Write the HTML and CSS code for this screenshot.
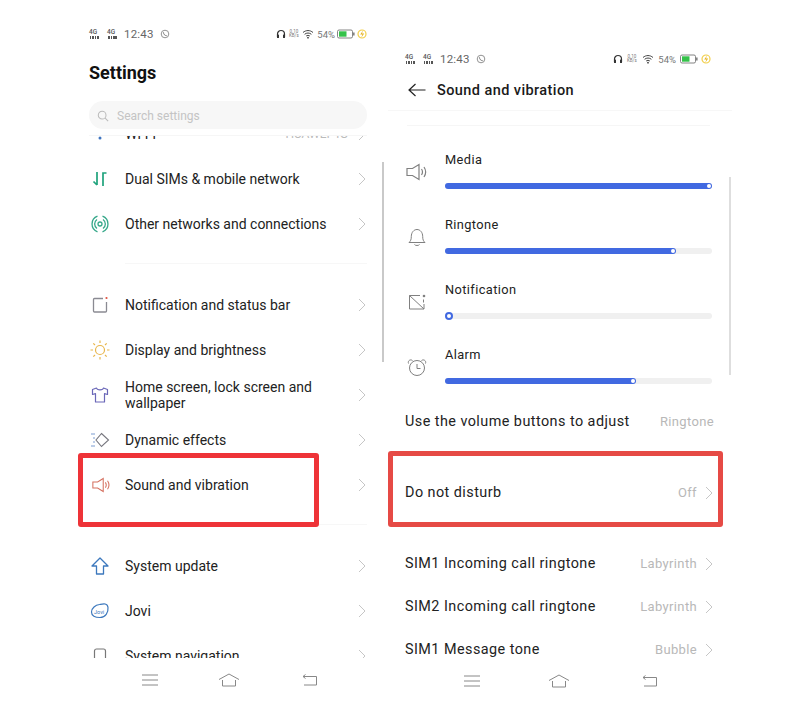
FILE: index.html
```html
<!DOCTYPE html>
<html>
<head>
  <meta charset="utf-8">
  <title>Settings - Sound and vibration</title>
  <link rel="stylesheet" href="styles.css">
</head>
<body>

  <!-- shared icons -->
  <svg class="defs" width="0" height="0">
    <symbol id="i-chev" viewBox="0 0 8 14"><path d="M1 1l6 6-6 6" fill="none" stroke="currentColor" stroke-width="1"/></symbol>
    <symbol id="i-whats" viewBox="0 0 10 10"><circle cx="5" cy="5" r="3.8" fill="none" stroke="#777" stroke-width=".8"/><path d="M3.5 3.3c0 2 1.300 3.300 3.200 3.400" fill="none" stroke="#777" stroke-width="1"/></symbol>
    <symbol id="i-head" viewBox="0 0 10 10"><path d="M1.500 8V5a3.500 3.500 0 0 1 7 0v3" fill="none" stroke="#333" stroke-width="1.200"/><rect x="1" y="5.500" width="2" height="3.500" rx=".6" fill="#333"/><rect x="7" y="5.500" width="2" height="3.500" rx=".6" fill="#333"/></symbol>
    <symbol id="i-wifi" viewBox="0 0 12 10"><path d="M1 3.500c3-2.600 7-2.600 10 0M2.600 5.300c2-1.700 4.800-1.700 6.800 0M4.200 7c1-.8 2.600-.8 3.600 0" fill="none" stroke="#444" stroke-width="1"/><circle cx="6" cy="8.700" r=".9" fill="#444"/></symbol>
    <symbol id="i-batt" viewBox="0 0 18 10"><rect x=".5" y="1" width="15" height="8" rx="1.500" fill="none" stroke="#666" stroke-width=".8"/><rect x="2" y="2.300" width="7.500" height="5.400" fill="#35c24a"/><rect x="16.200" y="3.500" width="1.300" height="3" fill="#666"/></symbol>
    <symbol id="i-bolt" viewBox="0 0 10 10"><circle cx="5" cy="5" r="4" fill="none" stroke="#f2cf4a" stroke-width="1.200"/><path d="M6 1.500L3.200 5.600h2.200L4.200 8.800 7.200 4.400H5z" fill="#e6b422"/></symbol>
    <symbol id="i-speaker" viewBox="0 0 22 18"><path d="M1 5.500h5.500L13 1.500v15l-6.500-4H1z" fill="none" stroke="currentColor" stroke-width="1.200"/><path d="M15.500 6c1.200 1.800 1.200 4.200 0 6M18 4c2 3 2 7 0 10" fill="none" stroke="currentColor" stroke-width="1.200"/></symbol>
    <symbol id="i-menu" viewBox="0 0 16 12"><path d="M0 1h16M0 6h16M0 11h16" stroke="#888" stroke-width="1"/></symbol>
    <symbol id="i-home" viewBox="0 0 22 14"><path d="M1 6.500L11 1l10 5.500" fill="none" stroke="#888" stroke-width="1"/><path d="M4.500 7v6h13V7" fill="none" stroke="#888" stroke-width="1"/></symbol>
    <symbol id="i-back" viewBox="0 0 16 12"><path d="M1 2.500h13.500v8.500H2" fill="none" stroke="#888" stroke-width="1"/><path d="M3.500 .5L1 2.500l2.500 2" fill="none" stroke="#888" stroke-width="1"/></symbol>
  </svg>

  <div class="phone phone-left">
    <div class="status">
      <span class="net">4G<i class="bars"></i></span>
      <span class="net">4G<i class="bars"></i></span>
      <span class="clock">12:43</span>
      <svg class="st-icon whats"><use href="#i-whats"/></svg>
      <span class="status-right">
        <svg class="st-icon"><use href="#i-head"/></svg>
        <span class="speed">0.10<br>KB/s</span>
        <svg class="st-icon wifi"><use href="#i-wifi"/></svg>
        <span class="pct">54%</span>
        <svg class="st-batt"><use href="#i-batt"/></svg>
        <svg class="st-icon"><use href="#i-bolt"/></svg>
      </span>
    </div>

    <h1 class="title">Settings</h1>

    <div class="search">
      <svg class="search-icon" viewBox="0 0 14 14"><circle cx="6" cy="6" r="4.500" fill="none" stroke="#bbb" stroke-width="1.200"/><path d="M9.500 9.500L13 13" stroke="#bbb" stroke-width="1.200"/></svg>
      <span>Search settings</span>
    </div>

    <div class="list">
      <div class="row row-first">
        <svg class="icon" viewBox="0 0 20 20"><path d="M2 6c5-4 11-4 16 0M5 10c3-2.500 7-2.500 10 0" fill="none" stroke="#3f74c0" stroke-width="1.200"/><circle cx="10" cy="14" r="1.500" fill="#3f74c0"/></svg>
        <span class="label">Wi-Fi</span>
        <span class="val">HUAWEI-4G</span>
        <svg class="chev"><use href="#i-chev"/></svg>
      </div>
      <div class="row">
        <svg class="icon" viewBox="0 0 20 20"><path d="M7 3v13M3.500 12.500L7 16" fill="none" stroke="#1fa37c" stroke-width="1.700"/><path d="M13 17V4h3.500" fill="none" stroke="#1fa37c" stroke-width="1.700"/></svg>
        <span class="label">Dual SIMs &amp; mobile network</span>
        <svg class="chev"><use href="#i-chev"/></svg>
      </div>
      <div class="row">
        <svg class="icon" viewBox="0 0 20 20"><circle cx="10" cy="10" r="2" fill="none" stroke="#36a88a" stroke-width="1.300"/><path d="M7 5.500a5.500 5.500 0 0 0 0 9M13 5.500a5.500 5.500 0 0 1 0 9M7.500 2.200a8.300 8.300 0 0 0 0 15.600M12.500 2.200a8.300 8.300 0 0 1 0 15.600" fill="none" stroke="#36a88a" stroke-width="1.300"/></svg>
        <span class="label">Other networks and connections</span>
        <svg class="chev"><use href="#i-chev"/></svg>
      </div>

      <div class="sep"></div>

      <div class="row">
        <svg class="icon" viewBox="0 0 20 20"><path d="M13 3.500H4.500a1 1 0 0 0-1 1V16a1 1 0 0 0 1 1h11a1 1 0 0 0 1-1V7" fill="none" stroke="#8a8a92" stroke-width="1.300"/><circle cx="16.500" cy="3" r="1.100" fill="#e0503f"/></svg>
        <span class="label">Notification and status bar</span>
        <svg class="chev"><use href="#i-chev"/></svg>
      </div>
      <div class="row">
        <svg class="icon icon-sun" viewBox="0 0 20 20"><circle cx="10" cy="10" r="4.500" fill="none" stroke="#e8b64c" stroke-width="1.200"/><path d="M10 .5v2.500M10 17v2.500M.5 10H3M17 10h2.500M3.300 3.300L5 5M15 15l1.700 1.700M16.700 3.300L15 5M5 15l-1.700 1.700" stroke="#e8b64c" stroke-width="1.200"/></svg>
        <span class="label">Display and brightness</span>
        <svg class="chev"><use href="#i-chev"/></svg>
      </div>
      <div class="row">
        <svg class="icon" viewBox="0 0 20 20"><path d="M6.500 3L2.500 4.500v5l3-.8V17h9V8.700l3 .8v-5L13.500 3c-.5 2.500-6.500 2.500-7 0z" fill="none" stroke="#6a67b8" stroke-width="1.200" stroke-linejoin="round"/></svg>
        <span class="label">Home screen, lock screen and wallpaper</span>
        <svg class="chev"><use href="#i-chev"/></svg>
      </div>
      <div class="row">
        <svg class="icon icon-wide" viewBox="0 0 20 20"><path d="M11.500 3.500L18.500 10l-7 6.500L6 10z" fill="none" stroke="#77777f" stroke-width="1.100"/><path d="M1 4h4M3 8h2M3 12h2M1 16h4" stroke="#7b9bd0" stroke-width="1"/></svg>
        <span class="label">Dynamic effects</span>
        <svg class="chev"><use href="#i-chev"/></svg>
      </div>
      <div class="row">
        <svg class="icon icon-red"><use href="#i-speaker"/></svg>
        <span class="label">Sound and vibration</span>
        <svg class="chev"><use href="#i-chev"/></svg>
      </div>

      <div class="sep"></div>

      <div class="row">
        <svg class="icon" viewBox="0 0 20 20"><path d="M10 2l8 8h-4.500v8h-7v-8H2z" fill="none" stroke="#3c78bd" stroke-width="1.300" stroke-linejoin="round"/></svg>
        <span class="label">System update</span>
        <svg class="chev"><use href="#i-chev"/></svg>
      </div>
      <div class="row">
        <svg class="icon" viewBox="0 0 20 20">
          <path d="M1.500 11c0-4 4-7 8-7.500 3-.5 8-2 8.500 3 .5 5-2.500 10-8 10-5 0-8.500-1.500-8.500-5.500z" fill="none" stroke="#3c78bd" stroke-width="1.200"/>
          <text x="4" y="12.500" class="jovi">Jovi</text>
        </svg>
        <span class="label">Jovi</span>
        <svg class="chev"><use href="#i-chev"/></svg>
      </div>
      <div class="row">
        <svg class="icon" viewBox="0 0 20 20"><rect x="4.500" y="3" width="11" height="15" rx="2" fill="none" stroke="#777" stroke-width="1.200"/></svg>
        <span class="label">System navigation</span>
        <svg class="chev"><use href="#i-chev"/></svg>
      </div>
    </div>

    <div class="navbar">
      <svg class="nav-menu"><use href="#i-menu"/></svg>
      <svg class="nav-home"><use href="#i-home"/></svg>
      <svg class="nav-back"><use href="#i-back"/></svg>
    </div>

    <div class="scrollbar"></div>
    <div class="redbox"></div>
  </div>

  <div class="phone phone-right">
    <div class="status">
      <span class="net">4G<i class="bars"></i></span>
      <span class="net">4G<i class="bars"></i></span>
      <span class="clock">12:43</span>
      <svg class="st-icon whats"><use href="#i-whats"/></svg>
      <span class="status-right">
        <svg class="st-icon"><use href="#i-head"/></svg>
        <span class="speed">0.10<br>KB/s</span>
        <svg class="st-icon wifi"><use href="#i-wifi"/></svg>
        <span class="pct">54%</span>
        <svg class="st-batt"><use href="#i-batt"/></svg>
        <svg class="st-icon"><use href="#i-bolt"/></svg>
      </span>
    </div>

    <div class="header">
      <svg class="arrow" viewBox="0 0 18 14"><path d="M17.500 7H1M7.500 1L1 7l6.500 6" fill="none" stroke="#222" stroke-width="1.200"/></svg>
      <span class="header-title">Sound and vibration</span>
    </div>

    <div class="list list-sound">
      <div class="topline"></div>

      <div class="vol">
        <svg class="vol-icon"><use href="#i-speaker"/></svg>
        <div class="vol-body">
          <div class="vol-name">Media</div>
          <div class="track"><div class="fill" style="width: 100%"></div></div>
        </div>
      </div>
      <div class="vol">
        <svg class="vol-icon" viewBox="0 0 20 20"><path d="M2 15.500h16c-1.500-1.500-2.300-2.500-2.300-6 0-4-2.500-7-5.700-7s-5.700 3-5.700 7c0 3.500-.8 4.500-2.300 6zM7.500 17.500c.5 1.300 4.500 1.300 5 0" fill="none" stroke="currentColor" stroke-width="1"/></svg>
        <div class="vol-body">
          <div class="vol-name">Ringtone</div>
          <div class="track"><div class="fill" style="width: 86.500%"></div></div>
        </div>
      </div>
      <div class="vol">
        <svg class="vol-icon" viewBox="0 0 20 20"><path d="M13 3.500H2.500V17h14.500V12M2.500 3.500L17 17" fill="none" stroke="currentColor" stroke-width="1"/><circle cx="17" cy="4" r="1.300" fill="currentColor"/><path d="M16.500 7.500v3" stroke="currentColor"/></svg>
        <div class="vol-body">
          <div class="vol-name">Notification</div>
          <div class="track"><div class="fill fill-zero" style="width: 3%"></div></div>
        </div>
      </div>
      <div class="vol">
        <svg class="vol-icon" viewBox="0 0 20 20"><circle cx="10" cy="11" r="7.500" fill="none" stroke="currentColor" stroke-width="1"/><path d="M10 7v4.500h3.500" fill="none" stroke="currentColor" stroke-width="1"/><path d="M1.500 6.500C.5 3.500 3.500 2 5.500 3.500M18.500 6.500c1-3-2-4.500-4-3" fill="none" stroke="currentColor" stroke-width="1"/></svg>
        <div class="vol-body">
          <div class="vol-name">Alarm</div>
          <div class="track"><div class="fill" style="width: 71.500%"></div></div>
        </div>
      </div>

      <div class="srow srow-adjust">
        <span class="label">Use the volume buttons to adjust</span>
        <span class="val">Ringtone</span>
      </div>
      <div class="srow srow-dnd">
        <span class="label">Do not disturb</span>
        <span class="val">Off</span>
        <svg class="chev"><use href="#i-chev"/></svg>
      </div>
      <div class="srow srow-sim">
        <span class="label">SIM1 Incoming call ringtone</span>
        <span class="val">Labyrinth</span>
        <svg class="chev"><use href="#i-chev"/></svg>
      </div>
      <div class="srow">
        <span class="label">SIM2 Incoming call ringtone</span>
        <span class="val">Labyrinth</span>
        <svg class="chev"><use href="#i-chev"/></svg>
      </div>
      <div class="srow">
        <span class="label">SIM1 Message tone</span>
        <span class="val">Bubble</span>
        <svg class="chev"><use href="#i-chev"/></svg>
      </div>
    </div>

    <div class="navbar">
      <svg class="nav-menu"><use href="#i-menu"/></svg>
      <svg class="nav-home"><use href="#i-home"/></svg>
      <svg class="nav-back"><use href="#i-back"/></svg>
    </div>

    <div class="scrollbar"></div>
    <div class="redbox"></div>
  </div>

</body>
</html>
```

FILE: styles.css
```css
html, body {
  margin: 0;
  padding: 0;
  height: 716px;
  overflow: hidden;
  background: #fff;
}

body {
  display: flex;
  font-family: Roboto, "Liberation Sans", sans-serif;
  color: #222;
}

.defs {
  position: absolute;
}

.phone {
  position: relative;
  box-sizing: border-box;
}

.phone-left {
  width: 312px;
  margin-left: 72px;
  padding: 27px 17px 0;
}

.phone-right {
  width: 344px;
  margin-left: 4px;
  padding: 52px 18px 0 17px;
}

/* status bar */
.status {
  display: flex;
  align-items: center;
  height: 14px;
  font-size: 11px;
  color: #666;
}

.net {
  position: relative;
  width: 18px;
  font-size: 6.500px;
  font-weight: 500;
  line-height: 6px;
  padding-bottom: 5px;
  color: #555;
}

.bars {
  position: absolute;
  left: 1px;
  bottom: 1px;
  width: 10px;
  height: 3px;
  background: repeating-linear-gradient(90deg, #555 0 1.500px, transparent 1.500px 2.500px);
}

.clock {
  font-size: 11.500px;
  margin-left: -1px;
  letter-spacing: 0.2px;
}

.st-icon {
  width: 10px;
  height: 10px;
}

.whats {
  margin-left: 6px;
}

.status-right {
  display: flex;
  align-items: center;
  margin-left: auto;
  gap: 2px;
}

.phone-right .status-right {
  gap: 3.500px;
  margin-right: 3px;
}

.speed {
  width: 11px;
  font-size: 4.500px;
  line-height: 4.500px;
  text-align: center;
  color: #777;
}

.wifi {
  width: 12px;
  margin-left: 1px;
}

.pct {
  font-size: 9.500px;
  color: #777;
  margin-left: 1px;
}

.st-batt {
  width: 18px;
  height: 10px;
}

/* left page */
.title {
  margin: 16px 0 0;
  height: 32px;
  line-height: 32px;
  font-size: 18px;
  font-weight: 700;
  color: #111;
}

.search {
  display: flex;
  align-items: center;
  margin-top: 12px;
  height: 28px;
  padding: 1px 0 0 8px;
  box-sizing: border-box;
  border-radius: 14px;
  background: #f7f7f7;
  font-size: 12px;
  color: #c4c4c4;
}

.search-icon {
  width: 12px;
  height: 12px;
  margin-right: 8px;
}

.list {
  height: 523px;
  margin-top: 6px;
  overflow: hidden;
  border-top: 1px solid #f6f6f6;
  box-sizing: border-box;
}

.row {
  display: flex;
  align-items: center;
  height: 45px;
  font-size: 14px;
  line-height: 16px;
}

.row-first {
  margin-top: -25px;
}

.icon {
  flex: none;
  width: 22px;
  height: 20px;
  margin-right: 14px;
  color: #d5705f;
}

.icon-red {
  width: 19px;
  height: 16px;
  margin: 0 14px 0 3px;
}

.row .label {
  flex: 1;
  max-width: 205px;
  color: #222;
}

.row-first .val {
  margin-left: auto;
  font-size: 12px;
  color: #bbb;
}

.row .chev {
  margin-left: auto;
}

.chev {
  flex: none;
  width: 8px;
  height: 14px;
  margin-right: 1px;
  color: #c6c6c6;
}

.row-first .chev {
  margin-left: 10px;
}

.sep {
  height: 36px;
  margin-left: 36px;
  background: linear-gradient(#f7f7f7, #f7f7f7) 0 17px / 100% 1px no-repeat;
}

/* right page */
.header {
  display: flex;
  align-items: center;
  height: 30px;
  margin: 9px -18px 0 -17px;
  padding: 0 0 5px 20px;
  border-bottom: 1px solid #f7f7f7;
}

.arrow {
  width: 18px;
  height: 14px;
  margin-right: 11px;
}

.header-title {
  font-size: 14.500px;
  font-weight: 500;
  letter-spacing: 0.42px;
  color: #1a1a1a;
}

.list-sound {
  height: 548px;
  margin-top: 0;
  border-top: 0;
}

.topline {
  height: 1px;
  margin: 14px 4px 22px 2px;
  background: #f6f6f6;
}

.vol {
  display: flex;
  height: 65px;
}

.vol-icon {
  flex: none;
  width: 22px;
  height: 20px;
  margin: 14px 17px 0 1px;
  color: #808080;
}

.vol-body {
  flex: 1;
  margin-right: 2px;
}

.vol-name {
  height: 24px;
  line-height: 24px;
  font-size: 12.800px;
  letter-spacing: 0.4px;
  color: #222;
}

.track {
  height: 6px;
  margin-top: 11px;
  border-radius: 3px;
  background: #f0f0f0;
}

.fill {
  position: relative;
  height: 100%;
  border-radius: 3px;
  background: #4169e1;
}

.fill::after {
  content: "";
  position: absolute;
  right: 1px;
  top: 1px;
  width: 4px;
  height: 4px;
  border-radius: 50%;
  background: #fff;
}

.fill-zero {
  background: none;
}

.fill-zero::after {
  right: 0;
  top: -1px;
  width: 4px;
  height: 4px;
  border: 2px solid #4169e1;
  background: #fff;
}

.srow {
  display: flex;
  align-items: center;
  height: 43px;
  font-size: 14.400px;
  letter-spacing: 0.45px;
}

.srow-adjust {
  height: 26px;
}

.srow-dnd {
  margin-top: 37px;
}

.srow-sim {
  margin-top: 28px;
}

.srow .val {
  margin-left: auto;
  font-size: 13px;
  letter-spacing: 0.35px;
  color: #b8b8b8;
}

.srow .chev {
  margin-left: 8px;
  margin-right: 1px;
}

/* bottom navigation */
.navbar {
  display: flex;
  align-items: center;
  height: 20px;
  margin-top: 12px;
}

.nav-menu {
  width: 16px;
  height: 12px;
}

.nav-home {
  width: 22px;
  height: 14px;
}

.nav-back {
  width: 16px;
  height: 12px;
}

.phone-left .nav-menu { margin-left: 53px; }
.phone-left .nav-home { margin-left: 60px; }
.phone-left .nav-back { margin-left: 62px; }

.phone-right .nav-menu { margin-left: 59px; }
.phone-right .nav-home { margin-left: 68px; }
.phone-right .nav-back { margin-left: 72px; }

/* overlays */
.scrollbar {
  position: absolute;
  width: 2px;
  background: #c9c9c9;
}

.phone-left .scrollbar {
  left: 310px;
  top: 162px;
  height: 200px;
}

.phone-right .scrollbar {
  left: 341px;
  top: 177px;
  height: 198px;
  background: #dedede;
}

.redbox {
  position: absolute;
  box-sizing: border-box;
  border: 5px solid #ee3338;
  border-radius: 3px;
}

.phone-left .redbox {
  left: 6px;
  top: 453px;
  width: 241px;
  height: 74px;
}

.phone-right .redbox {
  left: 0;
  top: 451px;
  width: 335px;
  height: 76px;
  border-color: #e64a45;
}

.jovi {
  font-size: 5.500px;
  fill: #3c78bd;
}
```
